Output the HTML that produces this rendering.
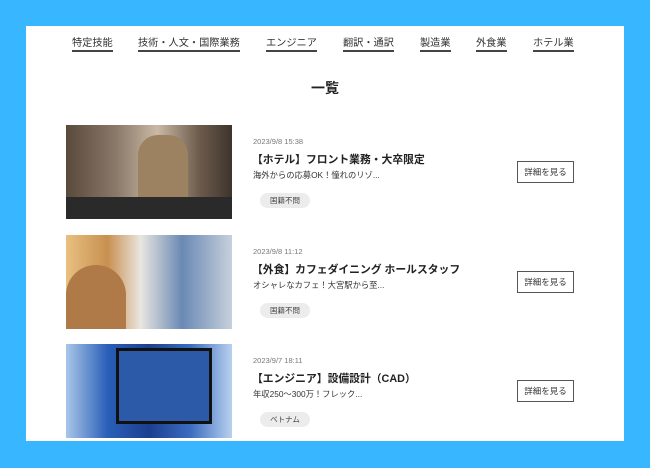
<!DOCTYPE html>
<html><head><meta charset="utf-8"><style>
body{margin:0;width:650px;height:468px;background:#38b6ff;font-family:"Liberation Sans","Noto Sans CJK JP",sans-serif;position:relative;overflow:hidden}
.w{position:absolute;left:26px;top:26px;width:598px;height:415px;background:#fff;overflow:hidden}
.nav{position:absolute;top:8px;left:0;width:100%;font-size:10.2px;color:#333}
.nav span{position:absolute;border-bottom:2px solid #444;padding-bottom:1px;white-space:nowrap}
h1{position:absolute;top:52px;left:0;width:100%;text-align:center;font-size:14px;margin:0;color:#222}
.row{position:absolute;left:40px;width:540px;height:94px}
.img{position:absolute;left:0;top:0;width:166px;height:94px}
.d{position:absolute;left:187px;top:12px;font-size:7.5px;color:#777}
.t{position:absolute;left:186px;top:26px;font-size:10.8px;font-weight:bold;color:#222}
.s{position:absolute;left:187px;top:44px;font-size:8.3px;color:#333}
.g{position:absolute;left:194px;top:68px;width:50px;height:15px;border-radius:8px;background:#ececec;font-size:7.5px;color:#444;text-align:center;line-height:15px}
.b{position:absolute;left:451px;top:36px;width:55px;height:20px;border:1px solid #555;font-size:8.5px;text-align:center;line-height:20px;color:#333}
</style></head><body><div class="w">
<div class="nav"><span style="left:46px">特定技能</span><span style="left:112px">技術・人文・国際業務</span><span style="left:240px">エンジニア</span><span style="left:317px">翻訳・通訳</span><span style="left:394px">製造業</span><span style="left:450px">外食業</span><span style="left:507px">ホテル業</span></div>
<h1>一覧</h1>
<div class="row" style="top:99px"><div class="img" style="background:linear-gradient(90deg,#5a4a3c 0%,#8a7868 30%,#c9b9a5 55%,#6d5c4d 80%,#3e342c 100%)"><div style="position:absolute;left:0;bottom:0;width:100%;height:22px;background:#2a2a2a"></div><div style="position:absolute;left:72px;top:10px;width:50px;height:62px;background:#9c8260;border-radius:20px 20px 0 0"></div></div>
<div class="d">2023/9/8 15:38</div><div class="t">【ホテル】フロント業務・大卒限定</div><div class="s">海外からの応募OK！憧れのリゾ...</div><div class="g">国籍不問</div><div class="b">詳細を見る</div></div>
<div class="row" style="top:209px"><div class="img" style="background:linear-gradient(90deg,#e8c080 0%,#c89050 25%,#e9e6e0 45%,#6a89b5 70%,#c7d0dc 100%)"><div style="position:absolute;left:0;top:30px;width:60px;height:64px;background:#b07a48;border-radius:30px 30px 0 0"></div></div>
<div class="d">2023/9/8 11:12</div><div class="t">【外食】カフェダイニング ホールスタッフ</div><div class="s">オシャレなカフェ！大宮駅から至...</div><div class="g">国籍不問</div><div class="b">詳細を見る</div></div>
<div class="row" style="top:318px"><div class="img" style="background:linear-gradient(90deg,#a9c6e8 0%,#2a5fb8 25%,#1b3f8f 50%,#3b6cc0 75%,#b8d0ee 100%)"><div style="position:absolute;left:50px;top:4px;width:90px;height:70px;background:#2d5aa8;border:3px solid #111"></div></div>
<div class="d">2023/9/7 18:11</div><div class="t">【エンジニア】設備設計（CAD）</div><div class="s">年収250〜300万！フレック...</div><div class="g">ベトナム</div><div class="b">詳細を見る</div></div>
</div></body></html>
